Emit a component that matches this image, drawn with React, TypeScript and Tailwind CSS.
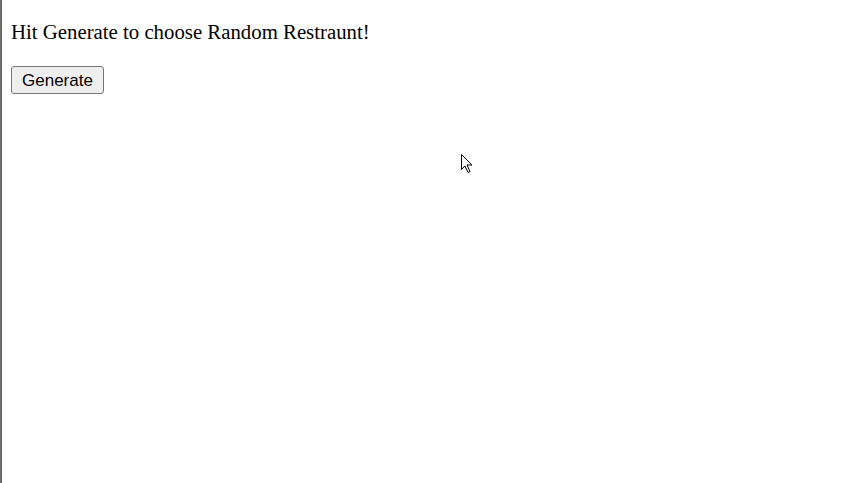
export default function App() {
  return (
    <div className="relative h-[483px] w-[856px] overflow-hidden border-l-2 border-[#6b6b6b] bg-white">
      <div className="px-[9px] pt-5">
        <p className="font-['Liberation_Serif',serif] text-[20.8px] leading-[24px] text-black">
          Hit Generate to choose Random Restraunt!
        </p>
        <button className="mt-[22px] h-[28px] rounded-[3px] border border-[#767676] bg-[#efefef] px-[10px] font-['Liberation_Sans',sans-serif] text-[17px] leading-none text-black">
          Generate
        </button>
      </div>
      <svg
        className="absolute left-[458px] top-[153px]"
        width="14"
        height="21"
        viewBox="0 0 14 21"
      >
        <path
          d="M1.5 1.5 V16.5 L5 13 L8 19.5 L10 18.5 L7 12 H12 Z"
          fill="white"
          stroke="black"
          strokeWidth="1"
          strokeLinejoin="miter"
        />
      </svg>
    </div>
  );
}
